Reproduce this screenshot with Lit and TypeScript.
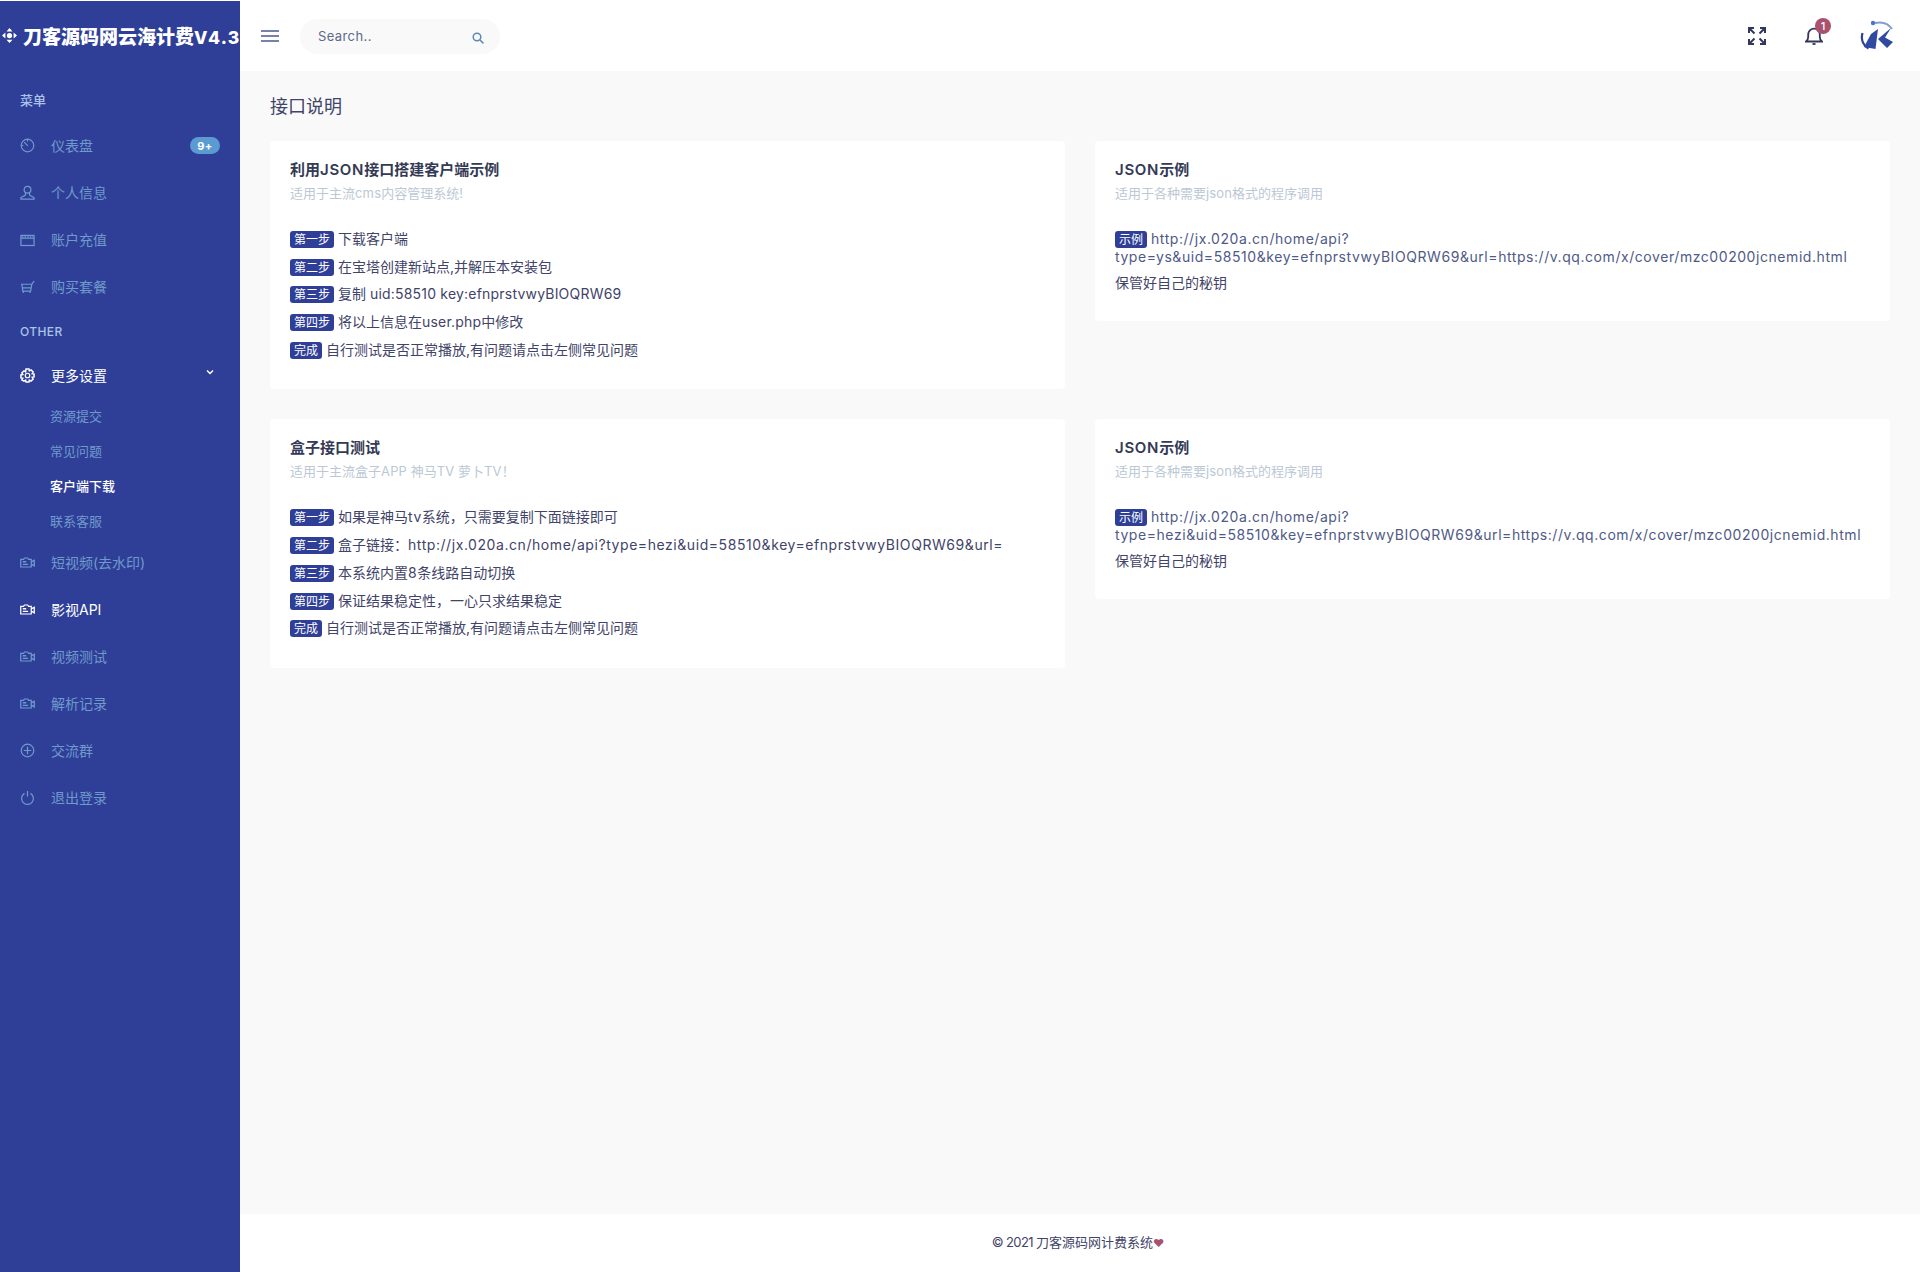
import { LitElement, html, css, svg } from "lit";
import { customElement } from "lit/decorators.js";

const S = (inner: unknown, vb = "0 0 16 16") => html`<svg class="ic" viewBox=${vb} fill="none" stroke="currentColor" stroke-width="1.3">${inner}</svg>`;

const icons: Record<string, unknown> = {
  meter: S(svg`<circle cx="8" cy="8" r="6.7"/><path d="M4.4 4.4 8.4 8.4M8 1.4v2.2M1.4 8h2.2"/>`),
  user: S(svg`<circle cx="8" cy="5" r="3.6"/><path d="M6 8.4 5.6 11 1 13.4V15h14v-1.6L10.4 11 10 8.4"/>`),
  wallet: S(svg`<rect x="1" y="3.6" width="14" height="10.8"/><path d="M1 6.6h14" /><path d="M2 5.1h12" stroke-dasharray="1.6 1.2"/>`),
  cart: S(svg`<path d="M1 5.6h11.6l2.4-3.4M2 5.6l1 7.4h8.4l1.2-7.4M3.2 9.4h9"/><path d="M3.6 13v2M10.6 13v2"/>`),
  gear: S(svg`<circle cx="8" cy="8" r="2.4"/><path d="M6.4 1h3.2l.4 2 1.8-1 2.2 2.2-1 1.8 2 .4v3.2l-2 .4 1 1.8-2.2 2.2-1.8-1-.4 2H6.4l-.4-2-1.8 1L2 12.8l1-1.8-2-.4V7.4l2-.4-1-1.8L4.2 3 6 4z" stroke-width="1.6"/>`),
  cam: S(svg`<path d="M.8 4.6h3l1-1.4h3.4l1 1.4H12v8.2H.8z"/><path d="M12 7.4l3.2-1.8v6l-3.2-1.8M3 7.2h3.6M3 10h5.6" stroke-width="1.4"/>`),
  plus: S(svg`<circle cx="8" cy="8" r="6.7"/><path d="M8 4v8M4 8h8"/>`),
  power: S(svg`<path d="M4.8 3.6a6.3 6.3 0 1 0 6.4 0M8 1v6"/>`),
};

type Item = { icon?: string; text: string; active?: boolean; badge?: string; open?: boolean; sub?: { t: string; a?: boolean }[]; label?: boolean };

const MENU: Item[] = [
  { label: true, text: "菜单" },
  { icon: "meter", text: "仪表盘", badge: "9+" },
  { icon: "user", text: "个人信息" },
  { icon: "wallet", text: "账户充值" },
  { icon: "cart", text: "购买套餐" },
  { label: true, text: "OTHER" },
  { icon: "gear", text: "更多设置", active: true, open: true, sub: [{ t: "资源提交" }, { t: "常见问题" }, { t: "客户端下载", a: true }, { t: "联系客服" }] },
  { icon: "cam", text: "短视频(去水印)" },
  { icon: "cam", text: "影视API", active: true },
  { icon: "cam", text: "视频测试" },
  { icon: "cam", text: "解析记录" },
  { icon: "plus", text: "交流群" },
  { icon: "power", text: "退出登录" },
];

type Step = [string, unknown];
const STEP1: Step[] = [
  ["第一步", "下载客户端"],
  ["第二步", "在宝塔创建新站点,并解压本安装包"],
  ["第三步", html`复制 <span class="en tight">uid:58510 key:efnprstvwyBIOQRW69</span>`],
  ["第四步", html`将以上信息在<span class="en tight">user.php</span>中修改`],
  ["完成", "自行测试是否正常播放,有问题请点击左侧常见问题"],
];
const STEP2: Step[] = [
  ["第一步", html`如果是神马<span class="en">tv</span>系统，只需要复制下面链接即可`],
  ["第二步", html`盒子链接：<span class="en">http://jx.020a.cn/home/api?type=hezi&uid=58510&key=efnprstvwyBIOQRW69&url=</span>`],
  ["第三步", html`本系统内置<span class="en">8</span>条线路自动切换`],
  ["第四步", "保证结果稳定性，一心只求结果稳定"],
  ["完成", "自行测试是否正常播放,有问题请点击左侧常见问题"],
];

@customElement("app-root")
export class AppRoot extends LitElement {
  static styles = css`
    :host { display: block; font-family: Inter, "Noto Sans CJK SC", sans-serif; font-size: 14px; color: #3f4468; }
    * { box-sizing: border-box; }
    .shell { display: flex; min-height: 1272px; background: #f9f9f9; border-top: 1px solid #fff; }
    .side { width: 240px; flex: none; background: #2f3f98; color: #6f9acb; }
    .brand { height: 69px; display: flex; align-items: center; gap: 6px; padding-left: 2px; color: #fff; font-weight: 900; font-size: 19px; white-space: nowrap; }
    .brand svg { width: 15px; height: 15px; flex: none; }
    .brand .v { letter-spacing: 1.2px; font-size: 17.5px; font-weight: 800; }
    .menu { padding-top: 9px; }
    .label { height: 42px; display: flex; align-items: center; padding: 0 0 2px 20px; font-size: 13px; font-weight: 500; color: #a9c4e6; letter-spacing: .1px; }
    .label.latin { padding: 3px 0 0 20px; font-size: 12px; letter-spacing: .4px; }
    .item { height: 47px; display: flex; align-items: center; padding-left: 20px; position: relative; }
    .item.on { color: #fff; }
    .ic { width: 15px; height: 15px; flex: none; margin: 2px 16px 0 0; }
    .badge { position: absolute; left: 190px; top: 16px; width: 30px; height: 17px; border-radius: 9px; background: #5b9bd1; color: #fff; font-size: 11px; font-weight: 700; display: flex; align-items: center; justify-content: center; letter-spacing: .5px; }
    .chev { position: absolute; left: 206px; top: 18px; width: 8px; height: 6px; }
    .sub { height: 35px; display: flex; align-items: center; padding-left: 50px; font-size: 13px; }
    .sub.on { color: #fff; font-weight: 500; }
    .main { flex: 1; min-width: 0; display: flex; flex-direction: column; }
    .top { height: 70px; flex: none; background: #fff; display: flex; align-items: center; padding-left: 21px; }
    .burger { width: 18px; height: 12px; flex: none; margin-right: 21px; color: #4a5a90; }
    .search { width: 200px; height: 35px; border-radius: 30px; background: #f9f9f9; display: flex; align-items: center; justify-content: space-between; padding: 0 16px 0 18px; font-size: 13px; color: #5d6a8a; letter-spacing: .4px; }
    .search span { margin-top: -1px; }
    .search svg { width: 12px; height: 12px; margin-top: 3px; color: #5b89b6; }
    .tools { margin-left: auto; display: flex; align-items: center; padding-right: 26px; color: #33375a; }
    .expand { width: 18px; height: 18px; margin-right: 39px; }
    .bell { width: 34px; height: 24px; position: relative; margin-right: 21px; }
    .bell svg { width: 18px; height: 18px; position: absolute; left: 0; top: 3px; }
    .dot { position: absolute; left: 10px; top: -6px; width: 16px; height: 16px; border-radius: 50%; background: #a85270; color: #fff; font-size: 11px; font-weight: 500; display: flex; align-items: center; justify-content: center; }
    .avatar { width: 34px; height: 32px; }
    .content { flex: 1; padding: 0 30px; }
    h1 { margin: 0; height: 70px; padding-bottom: 2px; display: flex; align-items: center; font-size: 18px; font-weight: 400; color: #3f4468; }
    .grid { display: grid; grid-template-columns: 1fr 1fr; column-gap: 30px; row-gap: 30px; align-items: start; }
    .card { background: #fff; border-radius: 4px; padding: 20px; }
    .card.big { padding-bottom: 22px; }
    h2 { margin: 0; font-size: 15px; font-weight: 600; line-height: 18px; color: #343a55; }
    h2 .en { letter-spacing: .7px; }
    .desc { margin: 5px 0 26px; font-size: 13px; line-height: 19px; color: #bcc8d4; }
    .desc.ex { margin-bottom: 27px; }
    .desc .en { letter-spacing: .15px; }
    .row { line-height: 20px; margin-bottom: 7.7px; white-space: nowrap; }
    .row.wrap { white-space: normal; line-height: 18px; margin-bottom: 7px; word-break: break-all; color: #4f5a86; }
    .row.plain { color: #3f4468; }
    .en { letter-spacing: .56px; }
    .en.tight { letter-spacing: .2px; }
    .tag { display: inline-block; height: 17px; line-height: 17px; padding: 0 4px; border-radius: 3px; background: #2f3f98; color: #fff; font-size: 12px; margin-right: 4px; vertical-align: 0; }
    .foot { height: 58px; flex: none; background: #fff; display: flex; align-items: center; justify-content: center; padding: 0 4px 4px 0; font-size: 13px; color: #3f4468; }
    .foot .yr { letter-spacing: -.6px; }
    .foot .heart { color: #a85270; font-size: 11px; }
  `;

  private item(m: Item) {
    if (m.label) return html`<div class="label ${m.text === "OTHER" ? "latin" : ""}">${m.text}</div>`;
    return html`
      <div class="item ${m.active ? "on" : ""}">
        ${icons[m.icon!]}<span>${m.text}</span>
        ${m.badge ? html`<span class="badge">${m.badge}</span>` : ""}
        ${m.open ? html`<svg class="chev" viewBox="0 0 8 6" fill="none" stroke="currentColor" stroke-width="1.5"><path d="M1 1.5 4 4.5 7 1.5"/></svg>` : ""}
      </div>
      ${m.sub ? m.sub.map((s) => html`<div class="sub ${s.a ? "on" : ""}">${s.t}</div>`) : ""}
    `;
  }

  private steps(title: unknown, desc: unknown, rows: Step[]) {
    return html`<div class="card big">
      <h2>${title}</h2>
      <div class="desc">${desc}</div>
      ${rows.map(([t, c]) => html`<div class="row"><span class="tag">${t}</span>${c}</div>`)}
    </div>`;
  }

  private example(kind: string, tail: string) {
    return html`<div class="card">
      <h2><span class="en">JSON</span>示例</h2>
      <div class="desc ex">适用于各种需要<span class="en">json</span>格式的程序调用</div>
      <div class="row wrap"><span class="tag">示例</span><span class="en">http://jx.020a.cn/home/api?<br />type=${kind}&uid=58510&key=efnprstvwyBIOQRW69&url=${tail}</span></div>
      <div class="row plain">保管好自己的秘钥</div>
    </div>`;
  }

  render() {
    const tail = "https://v.qq.com/x/cover/mzc00200jcnemid.html";
    return html`<div class="shell">
      <aside class="side">
        <div class="brand">
          <svg viewBox="0 0 16 16" fill="currentColor"><circle cx="8" cy="8" r="2.8"/><path d="M8 0l3.2 3.6H4.8zM8 16l-3.2-3.6h6.4zM0 8l3.6-3.2v6.4zM16 8l-3.6 3.2V4.800z"/></svg>
          <span>刀客源码网云海计费<span class="v">V4.3</span></span>
        </div>
        <nav class="menu">${MENU.map((m) => this.item(m))}</nav>
      </aside>
      <div class="main">
        <header class="top">
          <svg class="burger" viewBox="0 0 18 12" stroke="currentColor" stroke-width="1.5"><path d="M0 1h18M0 6h18M0 11h18"/></svg>
          <div class="search"><span>Search..</span>
            <svg viewBox="0 0 12 12" fill="none" stroke="currentColor" stroke-width="1.5"><circle cx="5" cy="5" r="3.8"/><path d="M8 8l3.4 3.4"/></svg>
          </div>
          <div class="tools">
            <svg class="expand" viewBox="0 0 18 18" fill="none" stroke="currentColor" stroke-width="2"><path d="M1 6V1h5M12 1h5v5M17 12v5h-5M6 17H1v-5M2 2l4.5 4.5M16 2l-4.5 4.5M16 16l-4.5-4.5M2 16l4.5-4.5"/></svg>
            <div class="bell">
              <svg viewBox="0 0 18 18" fill="none" stroke="currentColor" stroke-width="1.8"><path d="M1 14.5c1.500-1 2.200-2.400 2.200-4.500V7.500a5.800 5.800 0 0 1 11.600 0V10c0 2.100.7 3.500 2.200 4.500z"/><path d="M7.500 17h3" stroke-width="1.8"/></svg>
              <span class="dot">1</span>
            </div>
            <svg class="avatar" viewBox="0 0 34 32">
              <path d="M2.500 13c-2 7 1 13 6 15.500" fill="none" stroke="#2f3f98" stroke-width="2.200"/>
              <path d="M11 14 18 9 15.500 29 4 27z" fill="#2f4aa0"/>
              <path d="M18 19 31 8l-6 9.500 8 4.500-6 6z" fill="#2f4aa0"/>
              <path d="M15 3c7-1.500 13 0 17 6" fill="none" stroke="#7f9fd0" stroke-width="2"/>
              <circle cx="13" cy="3" r="2.200" fill="#4a78c0"/>
            </svg>
          </div>
        </header>
        <div class="content">
          <h1>接口说明</h1>
          <div class="grid">
            ${this.steps(html`利用<span class="en">JSON</span>接口搭建客户端示例`, html`适用于主流<span class="en">cms</span>内容管理系统!`, STEP1)}
            ${this.example("ys", tail)}
            ${this.steps("盒子接口测试", html`适用于主流盒子<span class="en">APP</span> 神马<span class="en">TV</span> 萝卜<span class="en">TV</span>！`, STEP2)}
            ${this.example("hezi", tail)}
          </div>
        </div>
        <footer class="foot"><span><span class="yr">© 2021 </span>刀客源码网计费系统<span class="heart">♥</span></span></footer>
      </div>
    </div>`;
  }
}
